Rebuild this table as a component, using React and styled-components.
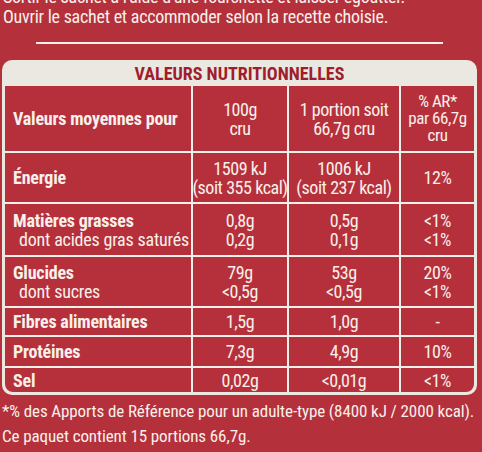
import React from "react";
import styled, { createGlobalStyle } from "styled-components";

const GlobalStyle = createGlobalStyle`
  html, body { margin: 0; padding: 0; background: #b4303b; }
  body { font-family: "Liberation Sans Narrow", "Roboto Condensed", "DejaVu Sans Condensed", "Liberation Sans", sans-serif; font-stretch: condensed; }
`;

const Page = styled.div`
  width: 482px;
  height: 452px;
  overflow: hidden;
  background: #b4303b;
  color: #f8f0ec;
`;

const Intro = styled.p`
  margin: -13px 0 0 3px;
  font-size: 18px;
  line-height: 20px;
  letter-spacing: -0.25px;
  white-space: nowrap;
`;

const Rule = styled.div`
  height: 2px;
  margin: 15px 39px 0 36px;
  background: #f4efe9;
`;

const Card = styled.div`
  margin: 16px 5px 0 2px;
  background: #ebe7e1;
  border-radius: 10px;
  padding: 0 3px 3px;
`;

const Title = styled.div`
  height: 26px;
  line-height: 28px;
  text-align: center;
  font-weight: 700;
  font-size: 18px;
  color: #9e1e2d;
`;

const Grid = styled.div`
  display: grid;
  grid-template-columns: 186px 94px 110px 73px;
  grid-template-rows: 65px 49px 51px 49px 27px 29px 24px;
  gap: 2px;
  background: #f3efea;
  border-radius: 0 0 8px 8px;
  overflow: hidden;
`;

const Cell = styled.div`
  background: #b6303b;
  display: flex;
  flex-direction: column;
  justify-content: center;
  align-items: ${({ left }) => (left ? "flex-start" : "center")};
  text-align: ${({ left }) => (left ? "left" : "center")};
  padding: ${({ left }) => (left ? "0 0 0 8px" : "0")};
  font-size: ${({ tight }) => (tight ? "17px" : "18px")};
  line-height: ${({ tight }) => (tight ? "17px" : "19px")};
  letter-spacing: ${({ left }) => (left ? "-0.2px" : "-0.45px")};
  white-space: nowrap;
`;

const Label = styled.span`
  font-weight: ${({ sub }) => (sub ? 400 : 700)};
  padding-left: ${({ sub }) => (sub ? "6px" : "0")};
`;

const Note = styled.p`
  margin: 4px 0 0 2px;
  font-size: 17px;
  line-height: 25px;
  letter-spacing: -0.1px;
  white-space: nowrap;
`;

const rows = [
  { labels: [["Énergie"]], cols: [["1509 kJ", "(soit 355 kcal)"], ["1006 kJ", "(soit 237 kcal)"], ["12%"]] },
  {
    labels: [["Matières grasses"], ["dont acides gras saturés", true]],
    cols: [["0,8g", "0,2g"], ["0,5g", "0,1g"], ["<1%", "<1%"]],
  },
  {
    labels: [["Glucides"], ["dont sucres", true]],
    cols: [["79g", "<0,5g"], ["53g", "<0,5g"], ["20%", "<1%"]],
  },
  { labels: [["Fibres alimentaires"]], cols: [["1,5g"], ["1,0g"], ["-"]] },
  { labels: [["Protéines"]], cols: [["7,3g"], ["4,9g"], ["10%"]] },
  { labels: [["Sel"]], cols: [["0,02g"], ["<0,01g"], ["<1%"]] },
];

export default function App() {
  return (
    <Page>
      <GlobalStyle />
      <Intro>
        Sortir le sachet à l'aide d'une fourchette et laisser égoutter.
        <br />
        Ouvrir le sachet et accommoder selon la recette choisie.
      </Intro>
      <Rule />
      <Card>
        <Title>VALEURS NUTRITIONNELLES</Title>
        <Grid>
          <Cell left>
            <Label>Valeurs moyennes pour</Label>
          </Cell>
          <Cell>
            <span>100g</span>
            <span>cru</span>
          </Cell>
          <Cell>
            <span>1 portion soit</span>
            <span>66,7g cru</span>
          </Cell>
          <Cell tight>
            <span>% AR*</span>
            <span>par 66,7g</span>
            <span>cru</span>
          </Cell>
          {rows.map((row, i) => (
            <React.Fragment key={i}>
              <Cell left>
                {row.labels.map(([text, sub]) => (
                  <Label key={text} sub={sub}>
                    {text}
                  </Label>
                ))}
              </Cell>
              {row.cols.map((lines, j) => (
                <Cell key={j}>
                  {lines.map((l, k) => (
                    <span key={k}>{l}</span>
                  ))}
                </Cell>
              ))}
            </React.Fragment>
          ))}
        </Grid>
      </Card>
      <Note>
        *% des Apports de Référence pour un adulte-type (8400 kJ / 2000 kcal).
        <br />
        Ce paquet contient 15 portions 66,7g.
      </Note>
    </Page>
  );
}
